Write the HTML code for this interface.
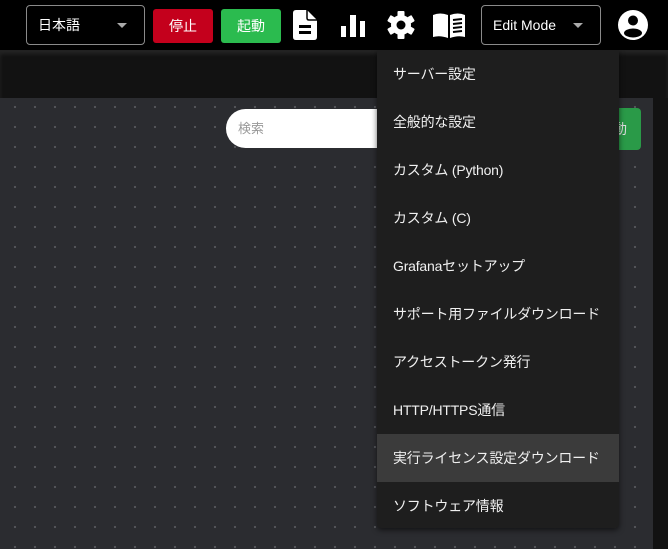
<!DOCTYPE html>
<html><head><meta charset="utf-8"><style>
*{box-sizing:border-box;margin:0;padding:0}
body{width:668px;height:549px;overflow:hidden;background:#121212;font-family:"Liberation Sans","Noto Sans CJK JP",sans-serif;position:relative;color:#fff}
.top{position:absolute;left:0;top:0;width:668px;height:50px;background:#000}
.band{position:absolute;left:0;top:50px;width:668px;height:48px;background:#121212;box-shadow:inset 0 4px 4px rgba(255,255,255,0.08)}
.canvas{position:absolute;left:0;top:98px;width:653px;height:451px;background-color:#2b2c30;background-image:radial-gradient(circle,#55565a 1px,transparent 1.3px);background-size:20px 20px;background-position:5px -1px}
.sel{position:absolute;top:5px;height:40px;border:1px solid #8a8a8a;border-radius:4px;font-size:14px;line-height:38px;padding-left:11px}
.sel:after{content:"";position:absolute;right:17px;top:17px;border:5px solid transparent;border-top:5px solid #aaa}
.btn{position:absolute;top:9px;width:60px;height:34px;border-radius:3px;font-size:14px;text-align:center;line-height:34px}
.ico{position:absolute}
.search{position:absolute;left:226px;top:109px;width:170px;height:39px;background:#fff;border-radius:20px;color:#999;font-size:13px;line-height:39px;padding-left:12px}
.gbtn{position:absolute;left:580px;top:108px;width:61px;height:42px;background:#2a9a48;border-radius:4px;color:#ddd;font-size:14px;line-height:42px;text-align:right;padding-right:14px}
.menu{position:absolute;left:377px;top:50px;width:242px;height:478px;background:#1e1e1e;border-radius:0 0 4px 4px;box-shadow:0 2px 6px rgba(0,0,0,.6)}
.menu div{height:48px;line-height:48px;padding-left:16px;font-size:14px;color:#f0f0f0;letter-spacing:-0.2px}
.menu .hl{background:#3b3b3b}
</style></head><body>
<div class="top"></div>
<div class="band"></div>
<div class="canvas"></div>
<div class="sel" style="left:26px;width:119px">日本語</div>
<div class="btn" style="left:153px;background:#c4001c">停止</div>
<div class="btn" style="left:221px;background:#2bbb4f">起動</div>
<svg class="ico" style="left:293px;top:10px" width="24" height="30" viewBox="0 0 24 30"><path d="M3 0H14L24 10V27Q24 30 21 30H3Q0 30 0 27V3Q0 0 3 0Z" fill="#fff"/><path d="M14 0V8Q14 10 16 10H24" fill="none" stroke="#000" stroke-width="1.5"/><rect x="6" y="15" width="12" height="3" fill="#000"/><rect x="6" y="21" width="12" height="3" fill="#000"/></svg>
<svg class="ico" style="left:341px;top:15px" width="24" height="22"><rect x="0" y="11" width="5" height="11" fill="#fff"/><rect x="9" y="0" width="6" height="22" fill="#fff"/><rect x="19" y="6" width="5" height="16" fill="#fff"/></svg>
<svg class="ico" style="left:386px;top:11px" width="30" height="28" viewBox="-15 -14 30 28"><g fill="#fff"><circle r="10"/><g id="t"><rect x="-3.5" y="-14" width="7" height="7" rx="1"/></g><use href="#t" transform="rotate(60)"/><use href="#t" transform="rotate(120)"/><use href="#t" transform="rotate(180)"/><use href="#t" transform="rotate(240)"/><use href="#t" transform="rotate(300)"/></g><circle r="4.5" fill="#000"/></svg>
<svg class="ico" style="left:433px;top:12px" width="32" height="26"><path d="M0 3Q7 0 15 3V26Q7 23 0 25Z" fill="#fff"/><path d="M17 3Q25 0 32 3V25Q25 23 17 26Z" fill="#fff"/><g stroke="#000" stroke-width="2"><line x1="20" y1="8" x2="29" y2="7"/><line x1="20" y1="12" x2="29" y2="11"/><line x1="20" y1="16" x2="29" y2="15"/><line x1="20" y1="20" x2="29" y2="19"/></g></svg>
<div class="sel" style="left:481px;width:120px">Edit Mode</div>
<svg class="ico" style="left:617px;top:9px" width="32" height="32"><circle cx="16" cy="16" r="15" fill="#fff"/><circle cx="16" cy="11.5" r="5" fill="#000"/><ellipse cx="16" cy="24" rx="9" ry="4.5" fill="#000"/></svg>
<div class="search">検索</div>
<div class="gbtn">動</div>
<div class="menu">
<div>サーバー設定</div>
<div>全般的な設定</div>
<div>カスタム (Python)</div>
<div>カスタム (C)</div>
<div>Grafanaセットアップ</div>
<div>サポート用ファイルダウンロード</div>
<div>アクセストークン発行</div>
<div>HTTP/HTTPS通信</div>
<div class="hl">実行ライセンス設定ダウンロード</div>
<div>ソフトウェア情報</div>
</div>
</body></html>
